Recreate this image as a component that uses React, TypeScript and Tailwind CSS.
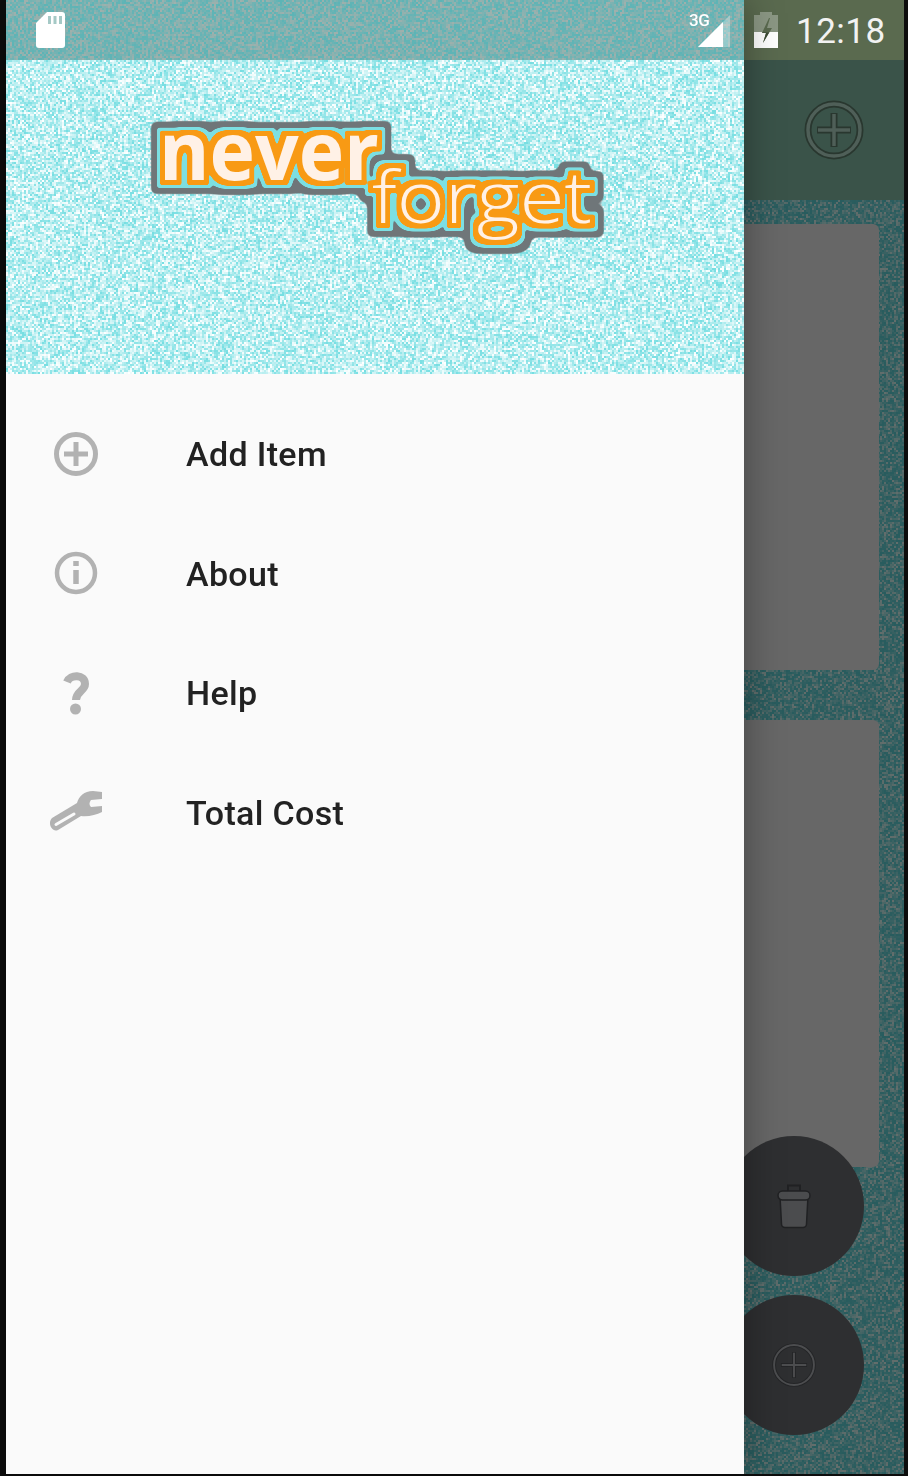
import { useEffect, useRef } from "react";

function Noise({ w, h, a, b, seed, bias = 1 }: { w: number; h: number; a: number[]; b: number[]; seed: number; bias?: number }) {
  const ref = useRef<HTMLCanvasElement>(null);
  useEffect(() => {
    const c = ref.current;
    if (!c) return;
    const ctx = c.getContext("2d");
    if (!ctx) return;
    const img = ctx.createImageData(c.width, c.height);
    let s = seed >>> 0;
    const rnd = () => {
      s = (Math.imul(s, 1664525) + 1013904223) >>> 0;
      return ((s ^ (s >>> 15)) >>> 8) / 16777216;
    };
    for (let i = 0; i < c.width * c.height; i++) {
      const t = Math.pow(rnd(), bias);
      img.data[i * 4] = a[0] + (b[0] - a[0]) * t;
      img.data[i * 4 + 1] = a[1] + (b[1] - a[1]) * t;
      img.data[i * 4 + 2] = a[2] + (b[2] - a[2]) * t;
      img.data[i * 4 + 3] = 255;
    }
    ctx.putImageData(img, 0, 0);
  }, []);
  return (
    <canvas
      ref={ref}
      width={Math.ceil(w / 2)}
      height={Math.ceil(h / 2)}
      className="absolute inset-0 [image-rendering:pixelated]"
      style={{ width: w, height: h }}
    />
  );
}

function SdIcon() {
  return (
    <svg width="30" height="36" viewBox="0 0 30 36">
      <path d="M11 0H26a3 3 0 0 1 3 3V33a3 3 0 0 1-3 3H3a3 3 0 0 1-3-3V11Z" fill="#fff" />
      <path d="M12 4h3v8h-3zM17.500 4h3v8h-3zM23 4h3v8h-3z" fill="#a5c9c6" />
    </svg>
  );
}

function SignalIcon() {
  return (
    <svg width="46" height="38" viewBox="0 0 46 38">
      <path d="M10 35 42 3V35Z" fill="#ffffff" fillOpacity="0.3" />
      <path d="M10 35 35 10V35Z" fill="#fff" />
    </svg>
  );
}

function BatteryIcon() {
  return (
    <svg width="24" height="36" viewBox="0 0 24 36">
      <path d="M6 0H18V3H24V36H0V3H6Z" fill="#fff" fillOpacity="0.3" />
      <path d="M0 20H24V36H0Z" fill="#fff" />
      <path d="M15 6 8 21H12L9 31 18 16H13L16 6Z" fill="#5a6a4f" />
      <path d="M8 21 H12 L9 31 L15 20.500 H8Z" fill="#3c4a35" />
    </svg>
  );
}

function RingPlus({ size, ring, line, edge }: { size: number; ring: number; line: string; edge: string }) {
  return (
    <svg width={size} height={size} viewBox="0 0 60 60" fill="none">
      <circle cx="30" cy="30" r="26" stroke={edge} strokeWidth={ring} />
      <circle cx="30" cy="30" r="26" stroke={line} strokeWidth={ring * 0.5} />
      <path d="M30 13V47M13 30H47" stroke={edge} strokeWidth={ring} />
      <path d="M30 14V46M14 30H46" stroke={line} strokeWidth={ring * 0.5} />
    </svg>
  );
}

function TrashIcon() {
  return (
    <svg width="34" height="46" viewBox="0 0 34 46">
      <path d="M11 9V2.500H23V9" fill="#2e2f31" stroke="#202123" strokeWidth="2" />
      <path d="M3 13 4.500 41a3.500 3.500 0 0 0 3.500 3.500H26a3.500 3.500 0 0 0 3.500-3.500L31 13Z" fill="#4b4c4e" stroke="#202123" strokeWidth="1.500" />
      <rect x="1" y="8" width="32" height="9" rx="4.500" fill="#4b4c4e" stroke="#202123" strokeWidth="1.500" />
    </svg>
  );
}

const G = "#b2b2b2";

function AddIcon() {
  return (
    <svg width="44" height="44" viewBox="0 0 44 44" fill="none" stroke={G} className="shrink-0">
      <circle cx="22" cy="22" r="19.500" strokeWidth="5" />
      <path d="M22 10V34M10 22H34" strokeWidth="5" />
    </svg>
  );
}

function InfoIcon() {
  return (
    <svg width="44" height="44" viewBox="0 0 44 44" fill="none" stroke={G} className="shrink-0">
      <circle cx="22" cy="22" r="19" strokeWidth="4.500" />
      <path d="M22 19V33" strokeWidth="5.500" />
      <path d="M22 10V15" strokeWidth="5.500" />
    </svg>
  );
}

function HelpIcon() {
  return (
    <svg width="44" height="44" viewBox="0 0 44 44" fill="none" className="shrink-0">
      <path d="M13 11C16 3 31 3 31 13C31 20 22 20 22 29" stroke={G} strokeWidth="8" />
      <circle cx="21.500" cy="38" r="5.500" fill={G} />
    </svg>
  );
}

function WrenchIcon() {
  return (
    <svg width="56" height="44" viewBox="0 0 56 44" fill="none" className="shrink-0">
      <path
        d="M4 28 29 13C31 6 36 1 45 1L54 2V9L43 10C41 13 41 15 43 17L54 16V22C48 25 40 27 33 26L10 40C4 43-1 33 4 28Z"
        fill={G}
      />
      <path d="M8 34.500 26 24" stroke="#fafafa" strokeWidth="3" strokeLinecap="round" />
    </svg>
  );
}

function Logo() {
  return (
    <svg width="480" height="150" viewBox="0 0 480 150" className="overflow-visible">
      <defs>
        <filter id="lg" x="-10%" y="-20%" width="120%" height="140%" colorInterpolationFilters="sRGB">
          <feMorphology in="SourceAlpha" operator="dilate" radius="14" />
          <feGaussianBlur stdDeviation="3" />
          <feComponentTransfer result="d3">
            <feFuncA type="linear" slope="6" intercept="-2.5" />
          </feComponentTransfer>
          <feFlood floodColor="#6f7679" />
          <feComposite in2="d3" operator="in" result="gray" />
          <feMorphology in="SourceAlpha" operator="dilate" radius="8" />
          <feGaussianBlur stdDeviation="1.500" />
          <feComponentTransfer result="d2">
            <feFuncA type="linear" slope="6" intercept="-2.5" />
          </feComponentTransfer>
          <feFlood floodColor="#7cdfe2" />
          <feComposite in2="d2" operator="in" result="cyan" />
          <feMorphology in="SourceAlpha" operator="dilate" radius="5" />
          <feGaussianBlur stdDeviation="1" />
          <feComponentTransfer result="d1">
            <feFuncA type="linear" slope="6" intercept="-2.5" />
          </feComponentTransfer>
          <feFlood floodColor="#f89a14" />
          <feComposite in2="d1" operator="in" result="orange" />
          <feMerge>
            <feMergeNode in="gray" />
            <feMergeNode in="cyan" />
            <feMergeNode in="orange" />
            <feMergeNode in="SourceGraphic" />
          </feMerge>
        </filter>
      </defs>
      <g filter="url(#lg)" fill="#fff1e6" fontFamily="'Open Sans', sans-serif">
        <text x="32" y="64" fontSize="80" fontWeight="700" textLength="220" lengthAdjust="spacingAndGlyphs">never</text>
        <text x="245" y="107" fontSize="72" fontWeight="300" textLength="220" lengthAdjust="spacingAndGlyphs">forget</text>
      </g>
    </svg>
  );
}

const items = [
  { label: "Add Item", icon: <AddIcon /> },
  { label: "About", icon: <InfoIcon /> },
  { label: "Help", icon: <HelpIcon /> },
  { label: "Total Cost", icon: <WrenchIcon /> },
];

export default function App() {
  return (
    <div className="w-[908px] h-[1476px] bg-[#0d0d0d] pl-[6px] pr-[4px] pb-[2px] overflow-hidden font-['Roboto',sans-serif]">
      <div className="flex h-full w-[898px]">
        <div className="relative z-10 w-[738px] h-full flex flex-col bg-[#fafafa] shadow-[0_0_36px_rgba(0,0,0,0.35)]">
          <div className="relative h-[60px] shrink-0 overflow-hidden">
            <Noise w={738} h={60} a={[92, 180, 182]} b={[160, 176, 172]} seed={7} bias={1.3} />
            <div className="relative flex items-center justify-between h-full pl-[30px] pr-[10px]">
              <SdIcon />
              <div className="relative mt-[2px]">
                <span className="absolute left-[1px] top-[-1px] text-[17px] leading-[18px] font-medium text-white tracking-[-0.5px]">3G</span>
                <SignalIcon />
              </div>
            </div>
          </div>
          <div className="relative h-[314px] shrink-0 overflow-hidden">
            <Noise w={738} h={314} a={[118, 222, 226]} b={[255, 255, 255]} seed={21} />
            <div className="relative pl-[121px] pt-[56px]">
              <Logo />
            </div>
          </div>
          <div className="flex flex-col pt-[20px]">
            {items.map((it) => (
              <div key={it.label} className="flex items-center h-[119.5px]">
                <div className="w-[44px] ml-[48px] mr-[88px] flex justify-center shrink-0">{it.icon}</div>
                <span className="text-[34px] font-medium text-[#222222] leading-none tracking-[0.35px] pt-[1px]">{it.label}</span>
              </div>
            ))}
          </div>
        </div>

        <div className="relative w-[160px] h-full flex flex-col">
          <div className="h-[60px] shrink-0 bg-[#5a6a4f] flex items-center pl-[10px] gap-[18px]">
            <BatteryIcon />
            <span className="text-[35px] text-[#f2f2f2] leading-none tracking-[0.5px] pt-[2px]">12:18</span>
          </div>
          <div className="h-[140px] shrink-0 bg-[#3a5349] flex items-center justify-end pr-[40px]">
            <RingPlus size={60} ring={7} line="#4f5f58" edge="#29372f" />
          </div>
          <div className="relative flex-1 overflow-visible">
            <div className="absolute inset-0 overflow-hidden">
              <Noise w={160} h={1274} a={[40, 92, 94]} b={[100, 110, 108]} seed={33} bias={2} />
            </div>
            <div className="relative flex flex-col gap-[50px] pt-[24px] pr-[25px]">
              <div className="h-[446px] bg-[#676767] rounded-r-[6px]" />
              <div className="h-[447px] bg-[#676767] rounded-r-[6px]" />
            </div>
            <div className="absolute right-[40px] top-[936px] w-[140px] h-[140px] rounded-full bg-[#2e2f31] flex items-center justify-center">
              <TrashIcon />
            </div>
            <div className="absolute right-[40px] top-[1095px] w-[140px] h-[140px] rounded-full bg-[#2e2f31] flex items-center justify-center">
              <RingPlus size={46} ring={5} line="#4c4d4f" edge="#242527" />
            </div>
          </div>
        </div>
      </div>
    </div>
  );
}
